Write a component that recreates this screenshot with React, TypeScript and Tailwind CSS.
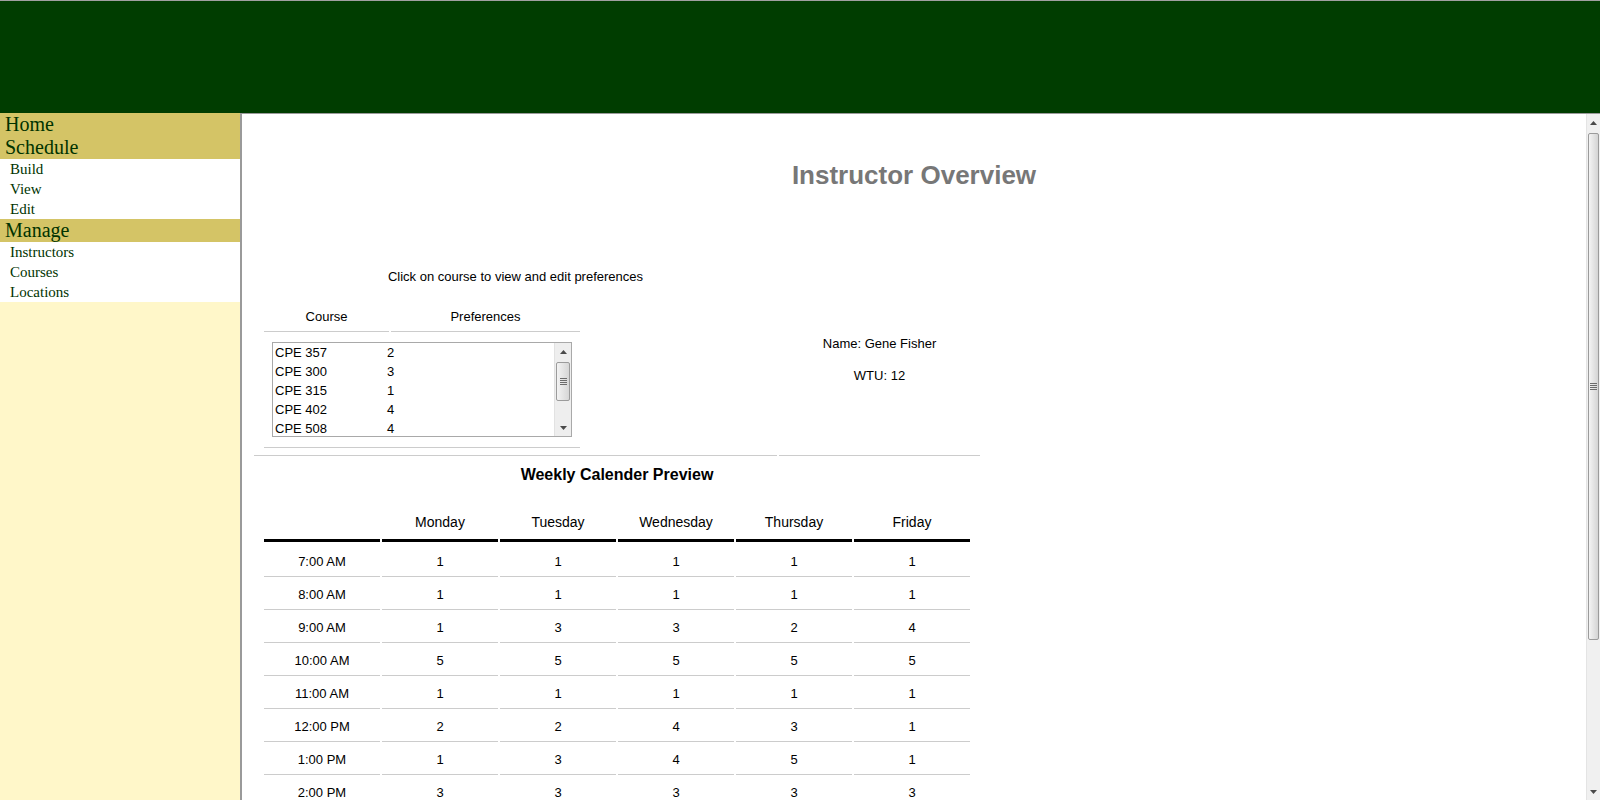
import React from 'react';

const sans = "font-['Liberation_Sans',Arial,sans-serif]";

const scheduleLinks = ['Build', 'View', 'Edit'];
const manageLinks = ['Instructors', 'Courses', 'Locations'];

const coursePrefs = [
  { course: 'CPE 357', pref: 2 },
  { course: 'CPE 300', pref: 3 },
  { course: 'CPE 315', pref: 1 },
  { course: 'CPE 402', pref: 4 },
  { course: 'CPE 508', pref: 4 },
];

const days = ['Monday', 'Tuesday', 'Wednesday', 'Thursday', 'Friday'];

const calendar: { time: string; prefs: number[] }[] = [
  { time: '7:00 AM', prefs: [1, 1, 1, 1, 1] },
  { time: '8:00 AM', prefs: [1, 1, 1, 1, 1] },
  { time: '9:00 AM', prefs: [1, 3, 3, 2, 4] },
  { time: '10:00 AM', prefs: [5, 5, 5, 5, 5] },
  { time: '11:00 AM', prefs: [1, 1, 1, 1, 1] },
  { time: '12:00 PM', prefs: [2, 2, 4, 3, 1] },
  { time: '1:00 PM', prefs: [1, 3, 4, 5, 1] },
  { time: '2:00 PM', prefs: [3, 3, 3, 3, 3] },
];

function Arrow({ down = false }: { down?: boolean }) {
  return (
    <svg width="7" height="4" viewBox="0 0 7 4" className="block">
      {down ? <path d="M0 0h7L3.5 4z" fill="#4a4a4a" /> : <path d="M0 4h7L3.5 0z" fill="#4a4a4a" />}
    </svg>
  );
}

function Grip() {
  return (
    <div className="flex flex-col gap-[1px]">
      <div className="w-[7px] h-px bg-[#6b6b6b]" />
      <div className="w-[7px] h-px bg-[#6b6b6b]" />
      <div className="w-[7px] h-px bg-[#6b6b6b]" />
      <div className="w-[7px] h-px bg-[#6b6b6b]" />
    </div>
  );
}

function SideHeading({ label }: { label: string }) {
  return <div className="h-[23px] leading-[22px] pl-[5px] text-[20px] bg-[#d4c466] text-[#003300]">{label}</div>;
}

function SideLink({ label }: { label: string }) {
  return <div className="h-[20px] leading-[20px] pl-[10px] text-[15px] bg-white text-[#003300]">{label}</div>;
}

export default function App() {
  return (
    <div className="h-screen w-full overflow-hidden flex flex-col bg-white">
      <div className="h-px bg-[#a0a0a0]" />
      <div className="h-[112px] bg-[#003d00]" />

      <div className="flex flex-1 min-h-0">
        {/* Sidebar */}
        <nav className="w-[240px] shrink-0 bg-[#fff7c9] font-['Liberation_Serif','Times_New_Roman',serif]">
          <SideHeading label="Home" />
          <SideHeading label="Schedule" />
          {scheduleLinks.map((l) => (
            <SideLink key={l} label={l} />
          ))}
          <SideHeading label="Manage" />
          {manageLinks.map((l) => (
            <SideLink key={l} label={l} />
          ))}
        </nav>

        {/* Content frame */}
        <div className="flex-1 min-w-0 flex border-t border-l-2 border-[#9a9a9a]">
          <main className={`flex-1 min-w-0 overflow-hidden text-black ${sans}`}>
            <h1 className="pt-[46px] h-[74px] leading-[30px] text-center text-[26px] font-bold text-[#777777]">
              Instructor Overview
            </h1>

            <div className="mt-[76px] ml-[12px] flex">
              <div className="w-[523px] h-[192px] border-b border-[#cccccc]">
                <p className="pt-[5px] leading-[16px] text-[13px] text-center">
                  Click on course to view and edit preferences
                </p>

                <div className="ml-[10px] mt-[15px] w-[316px] text-[13px]">
                  <div className="flex gap-[2px]">
                    <div className="w-[125px] pt-[9px] pb-[6px] leading-[16px] text-center border-b border-[#cccccc]">Course</div>
                    <div className="w-[189px] pt-[9px] pb-[6px] leading-[16px] text-center border-b border-[#cccccc]">Preferences</div>
                  </div>

                  <div className="ml-[8px] mt-[10px] w-[300px] h-[95px] border border-[#a9a9a9] flex">
                    <div className="flex-1 overflow-hidden pl-[2px]">
                      {coursePrefs.map((c) => (
                        <div key={c.course} className="flex h-[19px] leading-[19px]">
                          <span className="w-[112px]">{c.course}</span>
                          <span>{c.pref}</span>
                        </div>
                      ))}
                    </div>
                    <div className="w-[17px] flex flex-col bg-[#eeeeee] border-l border-[#e2e2e2]">
                      <div className="h-[17px] flex items-center justify-center">
                        <Arrow />
                      </div>
                      <div className="mt-[2px] mx-[1px] h-[39px] rounded-[2px] border border-[#9b9b9b] bg-gradient-to-r from-[#f3f3f3] to-[#d6d6d6] flex items-center justify-center">
                        <Grip />
                      </div>
                      <div className="flex-1" />
                      <div className="h-[17px] flex items-center justify-center">
                        <Arrow down />
                      </div>
                    </div>
                  </div>

                  <div className="mt-[10px] h-px bg-[#cccccc]" />
                </div>
              </div>

              <div className="ml-[2px] w-[201px] h-[192px] border-b border-[#cccccc] pt-[72px] text-center text-[13px]">
                <p className="leading-[16px]">Name: Gene Fisher</p>
                <p className="mt-[16px] leading-[16px]">WTU: 12</p>
              </div>
            </div>

            <div className="ml-[22px] w-[706px]">
              <h2 className="mt-[9px] leading-[19px] text-[16px] font-bold text-center">Weekly Calender Preview</h2>

              <div className="grid grid-cols-6 gap-x-[2px]">
                <div className="pt-[30px] pb-[9px] leading-[16px] border-b-[3px] border-black" />
                {days.map((d) => (
                  <div key={d} className="pt-[30px] pb-[9px] leading-[16px] text-[14px] text-center border-b-[3px] border-black">
                    {d}
                  </div>
                ))}
              </div>

              <div className="mt-[2px]">
                {calendar.map((row) => (
                  <div key={row.time} className="grid grid-cols-6 gap-x-[2px] text-[13px]">
                    <div className="h-[33px] pt-[10px] leading-[16px] text-center border-b border-[#cccccc]">{row.time}</div>
                    {row.prefs.map((p, i) => (
                      <div key={i} className="h-[33px] pt-[10px] leading-[16px] text-center border-b border-[#cccccc]">
                        {p}
                      </div>
                    ))}
                  </div>
                ))}
              </div>
            </div>
          </main>

          {/* Frame scrollbar */}
          <div className="w-[14px] shrink-0 flex flex-col bg-[#f0f0f0] border-l border-[#e4e4e4]">
            <div className="h-[18px] flex items-center justify-center">
              <Arrow />
            </div>
            <div className="mt-[1px] h-[507px] mx-[1px] rounded-[2px] border border-[#9b9b9b] bg-gradient-to-r from-[#f4f4f4] to-[#d4d4d4] flex items-center justify-center">
              <Grip />
            </div>
            <div className="flex-1" />
            <div className="h-[17px] flex items-center justify-center">
              <Arrow down />
            </div>
          </div>
        </div>
      </div>
    </div>
  );
}
